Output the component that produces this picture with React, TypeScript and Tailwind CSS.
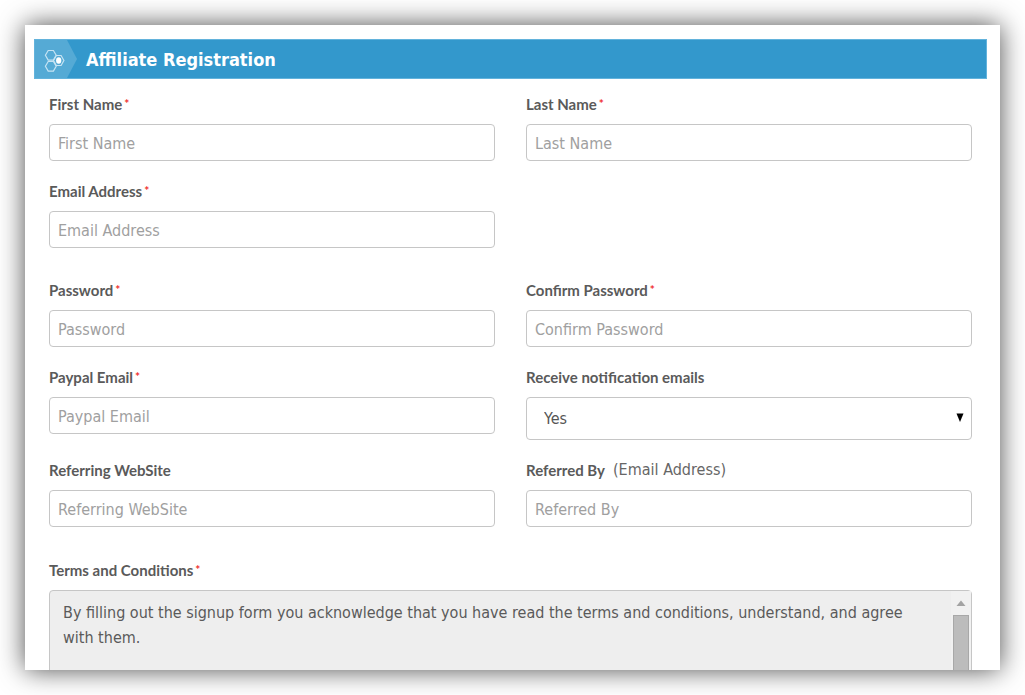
import type { ReactNode } from "react";

const fieldClass =
  "block h-[37px] w-full rounded border border-[#c6c6c6] bg-white px-2 pt-0.5 text-base text-[#555] outline-none placeholder:text-[#a0a0a0] placeholder:opacity-100 focus:border-[#3398cc]";

type LabelProps = { htmlFor: string; children: ReactNode; required?: boolean; hint?: string };

function Label({ htmlFor, children, required, hint }: LabelProps) {
  return (
    <label
      htmlFor={htmlFor}
      className="mb-2.5 flex h-5 items-center font-['Lato',sans-serif] text-[15px] font-bold text-[#5a5a5a]"
    >
      {children}
      {required && (
        <span className="ml-0.5 h-5 text-xs leading-5 font-bold text-[#f03030]">*</span>
      )}
      {hint && (
        <span className="ml-2 font-['DejaVu_Sans_Condensed','DejaVu_Sans',sans-serif] text-base font-normal text-[#666]">
          {hint}
        </span>
      )}
    </label>
  );
}

type FieldProps = {
  id: string;
  label: string;
  placeholder?: string;
  type?: string;
  required?: boolean;
  hint?: string;
};

function Field({ id, label, placeholder = label, type = "text", required, hint }: FieldProps) {
  return (
    <div>
      <Label htmlFor={id} required={required} hint={hint}>
        {label}
      </Label>
      <input id={id} name={id} type={type} placeholder={placeholder} className={fieldClass} />
    </div>
  );
}

function Header() {
  return (
    <header className="mr-[13px] ml-[9px] flex h-10 items-center border border-[#63b3dc] bg-[#3398cc]">
      <svg viewBox="0 0 43 38" className="h-full w-[43px] shrink-0" aria-hidden="true">
        <path d="M0 0H32L42 19L32 38H0Z" fill="#55aad5" />
        <g fill="none" stroke="#c5e3f3" strokeWidth="1.2">
          <path d="M13.200 10.500h5.200l2.800 4.800-2.800 4.800h-5.200l-2.800-4.800z" />
          <path d="M13.200 21.500h5.200l2.800 4.800-2.800 4.800h-5.200l-2.800-4.800z" />
          <path d="M21.300 15.500h4.800l2.800 5-2.800 5h-4.800l-2.800-5z" />
        </g>
        <ellipse cx="23.700" cy="20.500" rx="2.600" ry="3.200" fill="#fff" />
      </svg>
      <h1 className="ml-2 pt-px text-lg font-bold text-white">Affiliate Registration</h1>
    </header>
  );
}

export default function App() {
  return (
    <div className="flex h-screen bg-white p-[25px] font-['DejaVu_Sans_Condensed','DejaVu_Sans',sans-serif] text-base text-[#5a5a5a]">
      <main className="min-w-0 flex-1 overflow-hidden bg-white pt-3.5 shadow-[0_0_25px_rgba(0,0,0,0.7)]">
        <Header />
        <form className="pt-[15px] pr-7 pl-6">
          <div className="grid grid-cols-2 gap-x-[31px] gap-y-5">
            <Field id="first-name" label="First Name" required />
            <Field id="last-name" label="Last Name" required />
            <Field id="email" label="Email Address" type="email" required />
          </div>
          <div className="mt-8 grid grid-cols-2 gap-x-[31px] gap-y-5">
            <Field id="password" label="Password" type="password" required />
            <Field id="confirm-password" label="Confirm Password" type="password" required />
            <Field id="paypal" label="Paypal Email" type="email" required />
            <div>
              <Label htmlFor="notify">Receive notification emails</Label>
              <div className="relative">
                <select
                  id="notify"
                  className="block h-[43px] w-full appearance-none rounded border border-[#c6c6c6] bg-white px-[17px] text-[#555] outline-none"
                >
                  <option>Yes</option>
                  <option>No</option>
                </select>
                <svg
                  viewBox="0 0 8 9"
                  className="pointer-events-none absolute top-4 right-2 h-[9px] w-2"
                  aria-hidden="true"
                >
                  <path d="M0.500 0.500H7.500L4 9Z" />
                </svg>
              </div>
            </div>
            <Field id="website" label="Referring WebSite" />
            <Field id="referrer" label="Referred By" hint="(Email Address)" />
          </div>
          <div className="mt-[33px]">
            <Label htmlFor="terms" required>
              Terms and Conditions
            </Label>
            <div className="flex h-40 rounded border border-[#c6c6c6] bg-[#eee]">
              <textarea
                id="terms"
                readOnly
                className="min-w-0 flex-1 resize-none overflow-hidden bg-transparent py-[9px] pr-6 pl-[13px] leading-[25px] outline-none"
                defaultValue="By filling out the signup form you acknowledge that you have read the terms and conditions, understand, and agree with them."
              />
              <div className="flex w-5 flex-col items-center bg-[#f1f1f1]" aria-hidden="true">
                <svg viewBox="0 0 18 24" className="h-6 w-[18px] shrink-0">
                  <path d="M9 9.500L13.500 15H4.500Z" fill="#a3a3a3" />
                </svg>
                <div className="h-24 w-4 border border-[#a8a8a8] bg-[#bcbcbc]" />
              </div>
            </div>
          </div>
        </form>
      </main>
    </div>
  );
}
